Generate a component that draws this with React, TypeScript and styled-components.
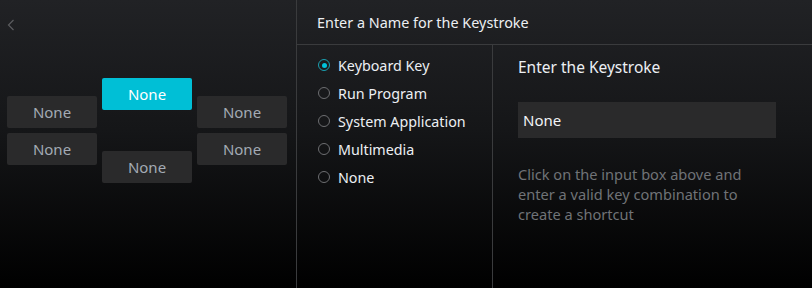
import React from "react";
import styled, { createGlobalStyle } from "styled-components";

const Global = createGlobalStyle`
  html, body { margin: 0; padding: 0; background: #000; }
  body { font-family: "Noto Sans", "Open Sans", sans-serif; }
  * { box-sizing: border-box; }
`;

const Page = styled.div`
  width: 812px;
  height: 288px;
  display: flex;
  background: linear-gradient(180deg, #212225 0%, #151618 45%, #000 100%);
  overflow: hidden;
`;

const LeftPanel = styled.div`
  width: 297px;
  flex-shrink: 0;
  border-right: 1px solid #3a3b3d;
  display: flex;
  flex-direction: column;
`;

const BackButton = styled.div`
  height: 40px;
  padding: 14px 0 0 7px;
  color: #5b5c5f;
`;

const Cluster = styled.div`
  display: grid;
  grid-template-columns: repeat(3, 90px);
  column-gap: 5px;
  padding-left: 7px;
  margin-top: 38px;
`;

const KeyColumn = styled.div<{ $top: number; $gap: number }>`
  display: flex;
  flex-direction: column;
  gap: ${(p) => p.$gap}px;
  padding-top: ${(p) => p.$top}px;
`;

const KeyButton = styled.div<{ $active?: boolean }>`
  height: 32px;
  border-radius: 2px;
  background: ${(p) => (p.$active ? "#00bfd6" : "#2a2a2b")};
  color: ${(p) => (p.$active ? "#ffffff" : "#a3aab4")};
  font-size: 15px;
  display: flex;
  align-items: center;
  justify-content: center;
`;

const RightPanel = styled.div`
  flex: 1;
  display: flex;
  flex-direction: column;
`;

const Header = styled.div`
  height: 45px;
  border-bottom: 1px solid #3a3b3d;
  padding-left: 20px;
  display: flex;
  align-items: center;
  color: #eceff3;
  font-size: 14.4px;
`;

const Body = styled.div`
  flex: 1;
  display: flex;
`;

const TypeList = styled.div`
  width: 196px;
  flex-shrink: 0;
  border-right: 1px solid #3a3b3d;
  padding-top: 6px;
  display: flex;
  flex-direction: column;
`;

const RadioRow = styled.div`
  height: 28px;
  display: flex;
  align-items: center;
  padding-left: 21px;
  gap: 8px;
  color: #eceff3;
  font-size: 14.3px;
`;

const RadioCircle = styled.span<{ $checked?: boolean }>`
  width: 12px;
  height: 12px;
  flex-shrink: 0;
  border-radius: 50%;
  border: 1.5px solid ${(p) => (p.$checked ? "#1a9fb0" : "#6d6e71")};
  display: flex;
  align-items: center;
  justify-content: center;
  &::after {
    content: "";
    width: 5px;
    height: 5px;
    border-radius: 50%;
    background: ${(p) => (p.$checked ? "#00c2da" : "transparent")};
  }
`;

const Detail = styled.div`
  flex: 1;
  padding: 10px 0 0 25px;
  display: flex;
  flex-direction: column;
`;

const DetailTitle = styled.div`
  height: 24px;
  display: flex;
  align-items: center;
  color: #eceff3;
  font-size: 15.5px;
`;

const KeyInput = styled.div`
  width: 258px;
  height: 36px;
  margin-top: 23px;
  background: #2a2a2b;
  color: #f2f4f6;
  font-size: 15px;
  padding-left: 5px;
  display: flex;
  align-items: center;
`;

const Hint = styled.div`
  margin-top: 26px;
  width: 256px;
  color: #707377;
  font-size: 14.6px;
  line-height: 20px;
`;

const keyLabel = "None";
const types = ["Keyboard Key", "Run Program", "System Application", "Multimedia", "None"];

export default function App() {
  return (
    <>
      <Global />
      <Page>
        <LeftPanel>
          <BackButton>
            <svg width="8" height="12" viewBox="0 0 8 12" fill="none">
              <path d="M6.5 1 L1.5 6 L6.5 11" stroke="currentColor" strokeWidth="1.2" />
            </svg>
          </BackButton>
          <Cluster>
            <KeyColumn $top={18} $gap={5}>
              <KeyButton>{keyLabel}</KeyButton>
              <KeyButton>{keyLabel}</KeyButton>
            </KeyColumn>
            <KeyColumn $top={0} $gap={41}>
              <KeyButton $active>{keyLabel}</KeyButton>
              <KeyButton>{keyLabel}</KeyButton>
            </KeyColumn>
            <KeyColumn $top={18} $gap={5}>
              <KeyButton>{keyLabel}</KeyButton>
              <KeyButton>{keyLabel}</KeyButton>
            </KeyColumn>
          </Cluster>
        </LeftPanel>
        <RightPanel>
          <Header>Enter a Name for the Keystroke</Header>
          <Body>
            <TypeList>
              {types.map((t, i) => (
                <RadioRow key={t}>
                  <RadioCircle $checked={i === 0} />
                  {t}
                </RadioRow>
              ))}
            </TypeList>
            <Detail>
              <DetailTitle>Enter the Keystroke</DetailTitle>
              <KeyInput>None</KeyInput>
              <Hint>Click on the input box above and enter a valid key combination to create a shortcut</Hint>
            </Detail>
          </Body>
        </RightPanel>
      </Page>
    </>
  );
}
